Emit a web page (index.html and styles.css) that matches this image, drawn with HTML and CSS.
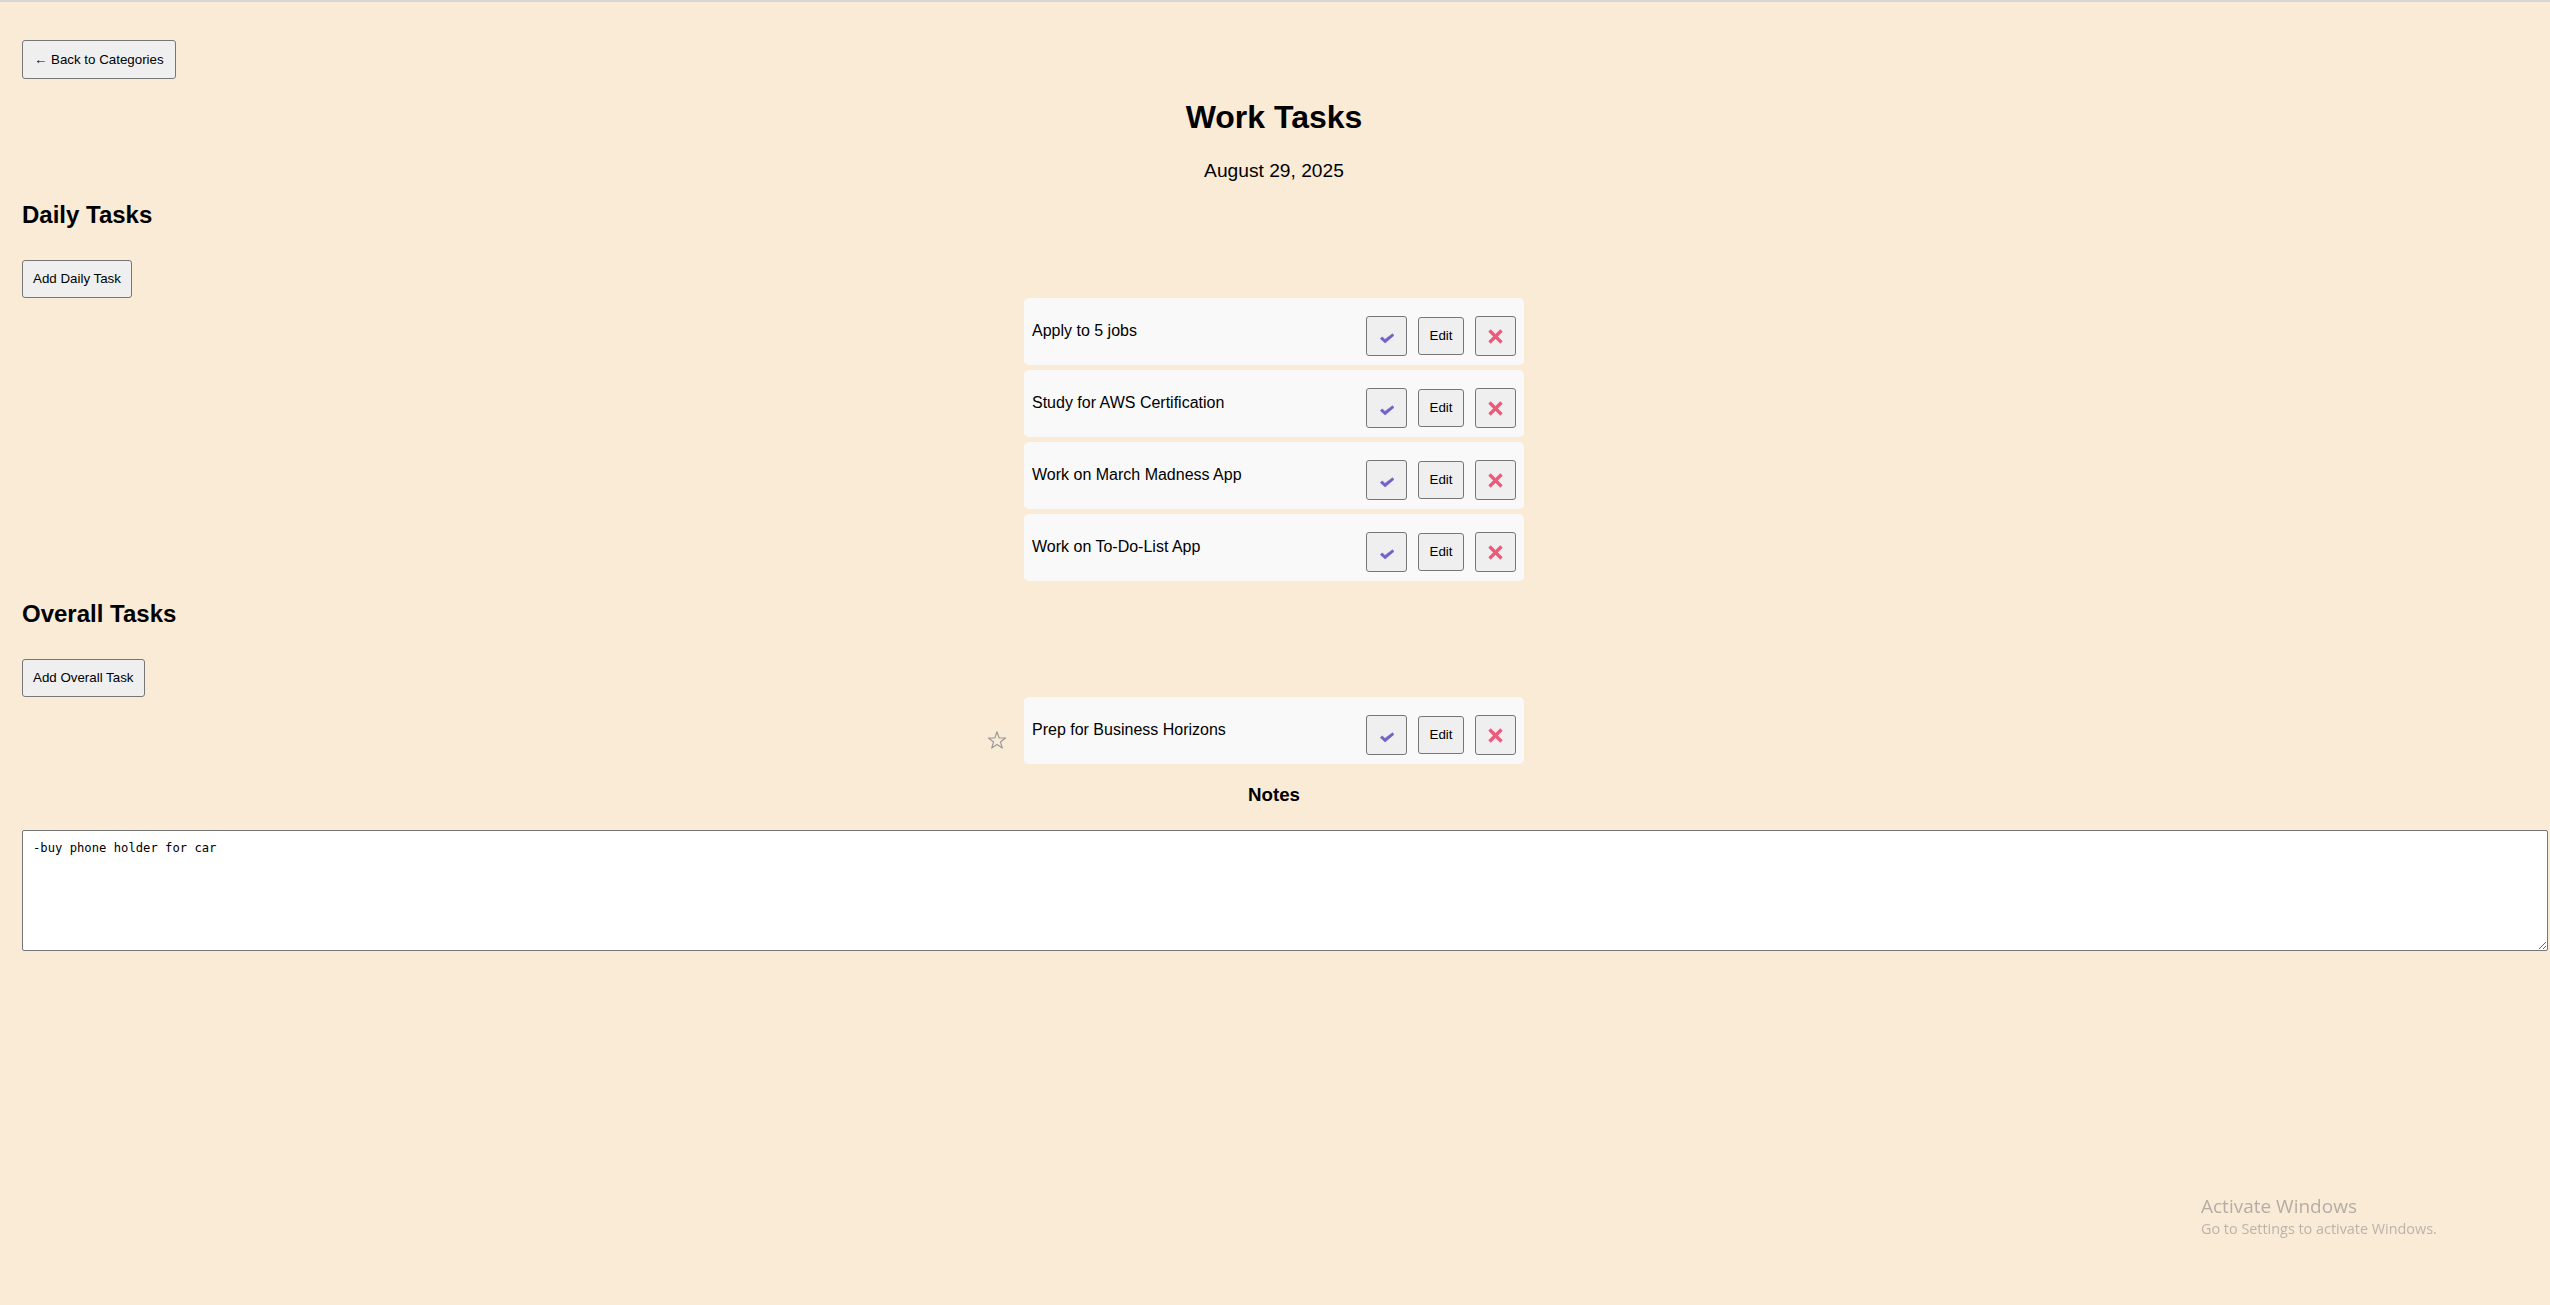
FILE: index.html
```html
<!DOCTYPE html>
<html lang="en">
<head>
<meta charset="utf-8">
<title>Work Tasks</title>
<link rel="stylesheet" href="styles.css">
</head>
<body>
<div class="topline"></div>
<main class="page">
  <button class="btn back-btn">← Back to Categories</button>
  <h1 class="title">Work Tasks</h1>
  <p class="date">August 29, 2025</p>

  <h2 class="section-title">Daily Tasks</h2>
  <button class="btn add-btn">Add Daily Task</button>
  <ul class="task-list">
    <li class="task">
      <span class="task-text">Apply to 5 jobs</span>
      <div class="actions">
        <button class="btn icon-btn check-btn"><svg width="16" height="11" viewBox="0 0 16 11"><path d="M1.2 5.6 L3.4 3.9 L5.9 6.4 L13.4 0.8 L15 2.4 L6.1 10 Z" fill="#7461c6" stroke="#7461c6" stroke-width="0.6" stroke-linejoin="round"/></svg></button>
        <button class="btn edit-btn">Edit</button>
        <button class="btn icon-btn del-btn"><svg width="15" height="15" viewBox="0 0 15 15"><path d="M1.5 1.5L13.5 13.5M13.5 1.5L1.5 13.5" stroke="#ec5a7c" stroke-width="3.4"/></svg></button>
      </div>
    </li>
    <li class="task">
      <span class="task-text">Study for AWS Certification</span>
      <div class="actions">
        <button class="btn icon-btn check-btn"><svg width="16" height="11" viewBox="0 0 16 11"><path d="M1.2 5.6 L3.4 3.9 L5.9 6.4 L13.4 0.8 L15 2.4 L6.1 10 Z" fill="#7461c6" stroke="#7461c6" stroke-width="0.6" stroke-linejoin="round"/></svg></button>
        <button class="btn edit-btn">Edit</button>
        <button class="btn icon-btn del-btn"><svg width="15" height="15" viewBox="0 0 15 15"><path d="M1.5 1.5L13.5 13.5M13.5 1.5L1.5 13.5" stroke="#ec5a7c" stroke-width="3.4"/></svg></button>
      </div>
    </li>
    <li class="task">
      <span class="task-text">Work on March Madness App</span>
      <div class="actions">
        <button class="btn icon-btn check-btn"><svg width="16" height="11" viewBox="0 0 16 11"><path d="M1.2 5.6 L3.4 3.9 L5.9 6.4 L13.4 0.8 L15 2.4 L6.1 10 Z" fill="#7461c6" stroke="#7461c6" stroke-width="0.6" stroke-linejoin="round"/></svg></button>
        <button class="btn edit-btn">Edit</button>
        <button class="btn icon-btn del-btn"><svg width="15" height="15" viewBox="0 0 15 15"><path d="M1.5 1.5L13.5 13.5M13.5 1.5L1.5 13.5" stroke="#ec5a7c" stroke-width="3.4"/></svg></button>
      </div>
    </li>
    <li class="task">
      <span class="task-text">Work on To-Do-List App</span>
      <div class="actions">
        <button class="btn icon-btn check-btn"><svg width="16" height="11" viewBox="0 0 16 11"><path d="M1.2 5.6 L3.4 3.9 L5.9 6.4 L13.4 0.8 L15 2.4 L6.1 10 Z" fill="#7461c6" stroke="#7461c6" stroke-width="0.6" stroke-linejoin="round"/></svg></button>
        <button class="btn edit-btn">Edit</button>
        <button class="btn icon-btn del-btn"><svg width="15" height="15" viewBox="0 0 15 15"><path d="M1.5 1.5L13.5 13.5M13.5 1.5L1.5 13.5" stroke="#ec5a7c" stroke-width="3.4"/></svg></button>
      </div>
    </li>
  </ul>

  <h2 class="section-title overall">Overall Tasks</h2>
  <button class="btn add-btn add-overall">Add Overall Task</button>
  <ul class="task-list">
    <li class="task">
      <svg class="star" width="20" height="20" viewBox="0 0 20 20"><polygon points="10,1.8 12.12,7.89 18.56,8.02 13.42,11.91 15.29,18.08 10,14.4 4.71,18.08 6.58,11.91 1.44,8.02 7.88,7.89" fill="none" stroke="#9a9a9a" stroke-width="1.2" stroke-linejoin="round"/></svg>
      <span class="task-text">Prep for Business Horizons</span>
      <div class="actions">
        <button class="btn icon-btn check-btn"><svg width="16" height="11" viewBox="0 0 16 11"><path d="M1.2 5.6 L3.4 3.9 L5.9 6.4 L13.4 0.8 L15 2.4 L6.1 10 Z" fill="#7461c6" stroke="#7461c6" stroke-width="0.6" stroke-linejoin="round"/></svg></button>
        <button class="btn edit-btn">Edit</button>
        <button class="btn icon-btn del-btn"><svg width="15" height="15" viewBox="0 0 15 15"><path d="M1.5 1.5L13.5 13.5M13.5 1.5L1.5 13.5" stroke="#ec5a7c" stroke-width="3.4"/></svg></button>
      </div>
    </li>
  </ul>

  <h3 class="notes-title">Notes</h3>
  <textarea class="notes">-buy phone holder for car</textarea>
</main>
<div class="watermark">
  <div class="wm-title">Activate Windows</div>
  <div class="wm-sub">Go to Settings to activate Windows.</div>
</div>
</body>
</html>
```

FILE: styles.css
```css
html, body {
  margin: 0;
  background: #faebd7;
}

body {
  font-family: "Liberation Sans", Arial, sans-serif;
  color: #000;
}

.topline {
  height: 2px;
  background: #d6d6d6;
}

.page {
  display: flex;
  flex-direction: column;
  padding: 38px 24px 0 22px;
}

.btn {
  font-family: "Liberation Sans", Arial, sans-serif;
  font-size: 13.33px;
  line-height: 16px;
  color: #000;
  background: #efefef;
  border: 1px solid #767676;
  border-radius: 3px;
  padding: 0 10px;
  height: 38px;
  box-sizing: border-box;
  cursor: pointer;
}

.back-btn {
  align-self: flex-start;
  height: 39px;
  padding: 0 11px;
}

.title {
  margin: 20px 0 0;
  font-size: 32px;
  line-height: 37px;
  font-weight: bold;
  text-align: center;
}

.date {
  margin: 24px 0 0;
  font-size: 19.2px;
  line-height: 22px;
  text-align: center;
}

.section-title {
  margin: 19px 0 0;
  font-size: 24px;
  line-height: 28px;
  font-weight: bold;
}

.section-title.overall {
  margin-top: 19px;
}

.add-btn {
  align-self: flex-start;
  margin-top: 31px;
}

.add-overall {
  margin-top: 31px;
}

.task-list {
  list-style: none;
  margin: 0;
  padding: 0;
  display: flex;
  flex-direction: column;
  align-items: center;
  gap: 5px;
}

.task {
  position: relative;
  width: 500px;
  box-sizing: border-box;
  display: flex;
  align-items: center;
  justify-content: space-between;
  padding: 8px 8px 9px;
  background: #f9f9f9;
  border-radius: 5px;
  font-size: 16px;
  line-height: 18px;
}

.actions {
  display: flex;
  align-items: center;
  gap: 11px;
  margin-top: 10px;
}

.icon-btn {
  width: 41px;
  height: 40px;
  padding: 0;
  display: flex;
  align-items: center;
  justify-content: center;
}

.check-btn svg {
  margin-top: 5px;
}

.del-btn svg {
  margin-top: 1px;
}

.edit-btn {
  height: 38px;
  padding: 0 10.5px;
}

.star {
  position: absolute;
  left: -37px;
  top: 33px;
}

.notes-title {
  margin: 20px 0 0;
  font-size: 18.72px;
  line-height: 22px;
  font-weight: bold;
  text-align: center;
}

.notes {
  margin: 24px 0 0;
  width: calc(100% + 22px);
  height: 121px;
  box-sizing: border-box;
  padding: 10px;
  border: 1px solid #767676;
  border-radius: 2px;
  background: #fff;
  color: #000;
  font-family: "DejaVu Sans Mono", "Liberation Mono", monospace;
  font-size: 12.2px;
  line-height: 15px;
  resize: both;
}

.watermark {
  position: fixed;
  left: 2201px;
  top: 1194px;
  font-family: "Open Sans", "Noto Sans", sans-serif;
  color: #b5ada5;
}

.wm-title {
  font-size: 19px;
  line-height: 24px;
}

.wm-sub {
  margin-top: 1px;
  font-size: 14.4px;
  line-height: 20px;
  color: #bbb3ab;
}
```
